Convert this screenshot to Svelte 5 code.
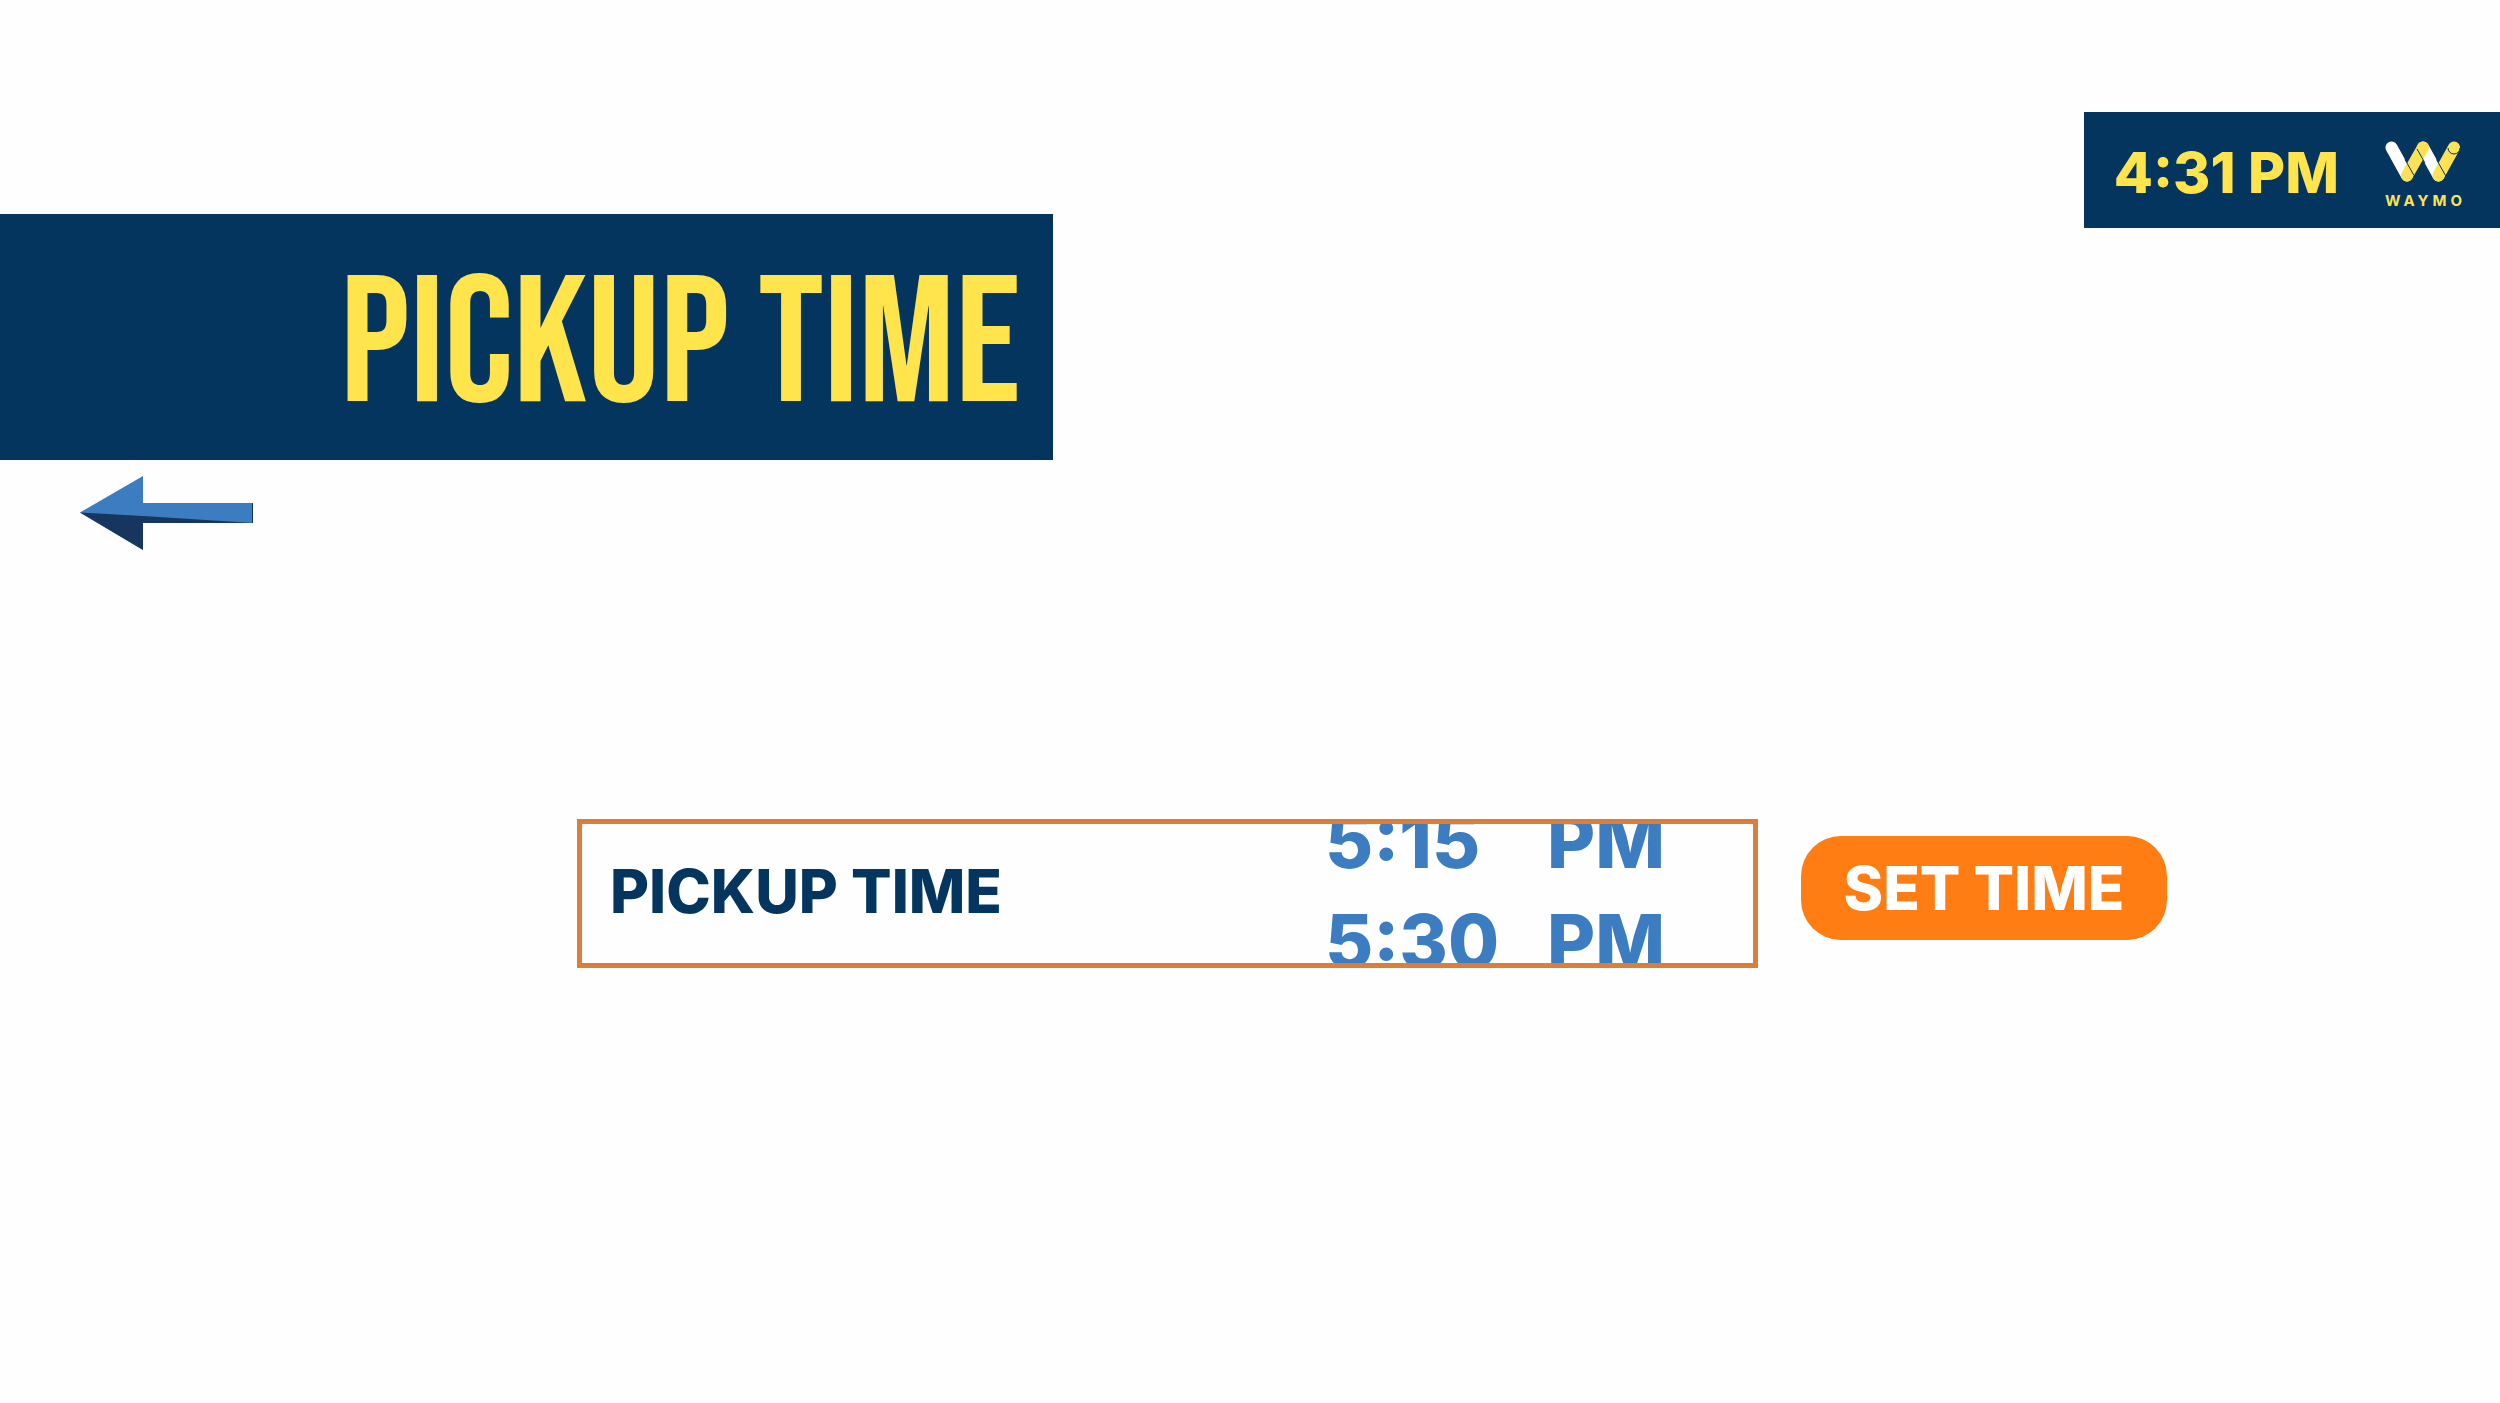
<script lang="ts">
	const now = '4:31 PM';
	const slots = [
		{ time: '5:15', period: 'PM' },
		{ time: '5:30', period: 'PM' }
	];

	let selected = $state(0);
</script>

<div class="page">
	<header class="top">
		<h1 class="banner">PICKUP TIME</h1>

		<div class="status">
			<time class="clock">{now}</time>
			<div class="brand">
				<svg class="mark" viewBox="0 0 76 42" aria-hidden="true">
					<g fill="none" stroke-width="12" stroke-linecap="round">
						<path d="M6.500 6.500 L22 34.500" stroke="#fff" />
						<path d="M38 6.500 L53.500 34.500" stroke="#fff" />
						<path d="M22 34.500 L38 6.500" stroke="#fde256" />
						<path d="M53.500 34.500 L69 6.500" stroke="#fde256" />
					</g>
					<g fill="none" stroke="#03355f" stroke-width="1">
						<path d="M20 18.500 L29 34.500" />
						<path d="M32 8 L40 22" />
						<path d="M51.500 18.500 L60.500 34.500" />
						<path d="M63 7 A6 6 0 0 0 75 7" />
					</g>
				</svg>
				<span class="wordmark">WAYMO</span>
			</div>
		</div>
	</header>

	<button class="back" type="button" aria-label="Back">
		<svg viewBox="0 0 173 74" aria-hidden="true">
			<path d="M0 36.500 L63 0 V27 H173 V47 H63 V74 Z" fill="#3b7dc0" />
			<path d="M0 36.500 L63 40 L173 47 H63 V74 Z" fill="#16365f" />
			<path d="M172.500 27 V47" stroke="#16365f" />
		</svg>
	</button>

	<main class="picker">
		<div class="field">
			<span class="label" id="pickup-label">PICKUP TIME</span>
			<ul class="slots" aria-labelledby="pickup-label">
				{#each slots as slot, i}
					<li>
						<button
							class="slot"
							type="button"
							aria-pressed={selected === i}
							onclick={() => (selected = i)}
						>
							<span>{slot.time}</span>
							<span>{slot.period}</span>
						</button>
					</li>
				{/each}
			</ul>
		</div>
		<button class="submit" type="button">SET TIME</button>
	</main>
</div>

<style>
	:global(body) {
		margin: 0;
		background: #fefefe;
	}

	.page {
		--navy: #03355f;
		--yellow: #ffe54b;
		--blue: #3b7dc0;
		padding-top: 112px;
		font-family: Inter, 'Liberation Sans', sans-serif;
		font-weight: 800;
		color: var(--navy);
	}

	button {
		padding: 0;
		border: 0;
		background: none;
		font: inherit;
		color: inherit;
		cursor: pointer;
	}

	.top {
		display: flex;
		align-items: flex-start;
		justify-content: space-between;
	}

	.banner {
		box-sizing: border-box;
		width: 42.1%;
		height: 246px;
		margin: 102px 0 0;
		padding: 0 32px 0 0;
		background: var(--navy);
		color: var(--yellow);
		font-family: 'Bebas Neue', 'Roboto Condensed', 'Liberation Sans Narrow', sans-serif;
		font-size: 180px;
		font-weight: 400;
		line-height: 266px;
		text-align: right;
		white-space: nowrap;
	}

	.status {
		box-sizing: border-box;
		display: flex;
		align-items: center;
		gap: 46px;
		height: 116px;
		padding: 6px 34px 0 30px;
		background: var(--navy);
		color: var(--yellow);
	}

	.clock {
		font-size: 57px;
		line-height: 60px;
	}

	.brand {
		display: flex;
		flex-direction: column;
		gap: 10px;
		padding-top: 3px;
	}

	.mark {
		display: block;
		width: 76px;
		height: 42px;
	}

	.wordmark {
		color: #fde256;
		font-size: 15px;
		font-weight: 700;
		line-height: 16px;
		letter-spacing: 4px;
	}

	.back {
		display: block;
		margin: 16px 0 0 80px;
	}

	.back svg {
		display: block;
		width: 173px;
		height: 74px;
	}

	.picker {
		display: flex;
		align-items: center;
		gap: 43px;
		margin-top: 269px;
		padding: 0 333px 0 577px;
	}

	.field {
		flex: 1;
		display: flex;
		align-items: center;
		justify-content: space-between;
		height: 139px;
		padding: 0 84px 0 28px;
		border: 5px solid #d97e3b;
		overflow: hidden;
	}

	.label {
		padding-bottom: 6px;
		font-size: 60px;
	}

	.slots {
		margin: 0;
		padding: 0 0 6px;
		list-style: none;
		color: var(--blue);
	}

	.slot {
		display: grid;
		grid-template-columns: 222px 122px;
		font-size: 74px;
		line-height: 100px;
		text-align: left;
	}

	.submit {
		width: 366px;
		height: 104px;
		margin-bottom: 11px;
		border-radius: 40px;
		background: #ff7d12;
		color: #fff;
		font-size: 60px;
	}
</style>
